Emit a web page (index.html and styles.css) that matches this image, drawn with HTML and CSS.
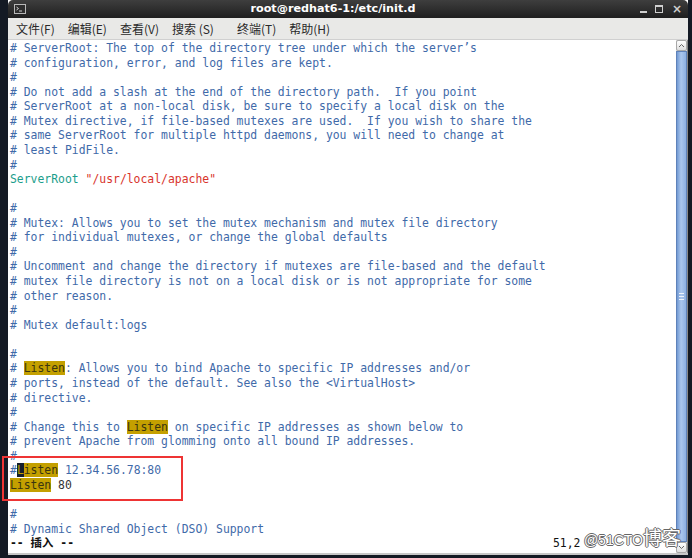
FILE: index.html
```html
<!DOCTYPE html>
<html lang="zh-CN">
<head>
  <meta charset="UTF-8">
  <meta name="viewport" content="width=device-width, initial-scale=1.0">
  <title>root@redhat6-1:/etc/init.d</title>
  <link rel="stylesheet" href="styles.css">
</head>
<body>
  <div class="window">
    <div class="titlebar">
      <span class="term-icon">
        <svg width="12" height="10" viewBox="0 0 12 10">
          <rect x="0.5" y="0.5" width="11" height="9" fill="#2e2e2e" stroke="#b8b8b8"/>
          <polyline points="2.5,3 4.5,4.5 2.5,6" fill="none" stroke="#e0e0e0" stroke-width="0.9"/>
          <line x1="5" y1="7" x2="8" y2="7" stroke="#e0e0e0" stroke-width="0.9"/>
        </svg>
      </span>
      <span class="title">root@redhat6-1:/etc/init.d</span>
      <span class="controls">
        <span class="ctl-min"></span>
        <span class="ctl-max"></span>
        <span class="ctl-close">×</span>
      </span>
    </div>

    <div class="menubar">
      <span>文件(F)</span>
      <span>编辑(E)</span>
      <span>查看(V)</span>
      <span class="menu-search">搜索 (S)</span>
      <span>终端(T)</span>
      <span>帮助(H)</span>
    </div>

    <div class="body">
      <div class="screen">
<pre class="buffer"># ServerRoot: The top of the directory tree under which the server’s
# configuration, error, and log files are kept.
#
# Do not add a slash at the end of the directory path.  If you point
# ServerRoot at a non-local disk, be sure to specify a local disk on the
# Mutex directive, if file-based mutexes are used.  If you wish to share the
# same ServerRoot for multiple httpd daemons, you will need to change at
# least PidFile.
#
<span class="key">ServerRoot</span> <span class="str">"/usr/local/apache"</span>

#
# Mutex: Allows you to set the mutex mechanism and mutex file directory
# for individual mutexes, or change the global defaults
#
# Uncomment and change the directory if mutexes are file-based and the default
# mutex file directory is not on a local disk or is not appropriate for some
# other reason.
#
# Mutex default:logs

#
# <span class="hl">Listen</span>: Allows you to bind Apache to specific IP addresses and/or
# ports, instead of the default. See also the &lt;VirtualHost&gt;
# directive.
#
# Change this to <span class="hl">Listen</span> on specific IP addresses as shown below to
# prevent Apache from glomming onto all bound IP addresses.
#
#<span class="cursor">L</span><span class="hl">isten</span> 12.34.56.78:80
<span class="hl">Listen</span><span class="plain"> 80</span>

#
# Dynamic Shared Object (DSO) Support</pre>
        <div class="statusline">
          <span class="mode">-- 插入 --</span>
          <span class="ruler">51,2</span>
        </div>
      </div>

      <div class="scrollbar">
        <div class="sb-btn">
          <svg width="7" height="5" viewBox="0 0 7 5"><polyline points="1,4 3.5,1.5 6,4" fill="none" stroke="#666" stroke-width="1"/></svg>
        </div>
        <div class="thumb"><span class="grip"></span></div>
        <div class="sb-btn">
          <svg width="7" height="5" viewBox="0 0 7 5"><polyline points="1,1 3.5,3.5 6,1" fill="none" stroke="#666" stroke-width="1"/></svg>
        </div>
      </div>
    </div>

    <!-- annotation over the Listen lines -->
    <div class="mark"></div>
    <div class="watermark">@51CTO<span class="wm-cjk">博客</span></div>
  </div>
</body>
</html>
```

FILE: styles.css
```css
body {
  margin: 0;
  width: 692px;
  height: 558px;
  overflow: hidden;
  background: #141a24;
}
.window {
  position: relative;
  box-sizing: border-box;
  margin-left: 8px;
  width: 680px;
  height: 555px;
  display: flex;
  flex-direction: column;
  background: #fff;
  border-bottom: 2px solid #c8c8c8;
}
.titlebar {
  height: 18px;
  flex: none;
  display: flex;
  align-items: center;
  padding: 0 6px 0 6px;
  background: linear-gradient(#3e3e3e, #1f1f1f);
  border-radius: 5px 5px 0 0;
  color: #fff;
}
.term-icon {
  width: 12px;
  height: 10px;
  display: flex;
}
.title {
  flex: 1;
  text-align: center;
  font-family: "DejaVu Sans", sans-serif;
  font-weight: bold;
  font-size: 11.2px;
  line-height: 18px;
}
.controls {
  width: 42px;
  display: flex;
  align-items: center;
  justify-content: space-between;
  color: #cfcfcf;
}
.ctl-min {
  width: 7px;
  height: 2px;
  margin-top: 6px;
  background: #cfcfcf;
}
.ctl-max {
  width: 6px;
  height: 5px;
  border: 1px solid #cfcfcf;
  border-top-width: 2px;
}
.ctl-close {
  font-family: "DejaVu Sans", sans-serif;
  font-size: 12px;
  font-weight: bold;
  line-height: 12px;
}
.menubar {
  height: 21px;
  flex: none;
  display: flex;
  align-items: center;
  gap: 13px;
  padding-left: 8px;
  background: #e9e9e7;
  border-bottom: 1px solid #d0d0d0;
  font-family: "Noto Sans CJK SC", sans-serif;
  font-size: 12px;
  color: #2a2a2a;
}
.menu-search {
  margin-right: 10px;
}
.body {
  flex: 1;
  display: flex;
  min-height: 0;
}
.screen {
  flex: 1;
  padding: 1px 0 0 2px;
  font-family: "DejaVu Sans Mono", "Noto Sans CJK SC", monospace;
  font-size: 11.42px;
  line-height: 14.56px;
}
.buffer {
  margin: 0;
  font: inherit;
  color: #3f6aa9;
}
.key {
  color: #1c9e8c;
}
.str {
  color: #d8342c;
}
.hl {
  background: #c4a000;
  color: #3a3510;
}
.cursor {
  background: #16202e;
  color: #c4a000;
}
.plain {
  color: #333;
}
.statusline {
  display: flex;
  color: #111;
}
.mode {
  width: 543px;
  font-weight: bold;
}
.scrollbar {
  width: 11px;
  flex: none;
  display: flex;
  flex-direction: column;
  background: #dcdcdc;
  border-right: 1px solid #8a8a8a;
}
.sb-btn {
  height: 11px;
  flex: none;
  display: flex;
  align-items: center;
  justify-content: center;
  box-sizing: border-box;
  background: linear-gradient(#ffffff, #dedede);
  border: 1px solid #a8a8a8;
  border-radius: 2px;
}
.thumb {
  flex: 1;
  display: flex;
  align-items: center;
  justify-content: center;
  background: linear-gradient(to right, #7199d2, #abc7ee 45%, #8db0e2);
  border: 1px solid #5f82ba;
}
.grip {
  width: 5px;
  height: 5px;
  border-top: 1px solid #eef3fb;
  border-bottom: 1px solid #eef3fb;
  background: linear-gradient(transparent 2px, #eef3fb 2px, #eef3fb 3px, transparent 3px);
}
.mark {
  position: absolute;
  left: -6px;
  top: 456px;
  width: 177px;
  height: 41px;
  border: 2px solid #ee3434;
}
.watermark {
  position: absolute;
  right: 7px;
  bottom: 3px;
  font-family: "Liberation Sans", "Noto Sans CJK SC", sans-serif;
  font-size: 14px;
  line-height: 20px;
  color: #fff;
  text-shadow: 1px 0 0 #666, -1px 0 0 #666, 0 1px 0 #666, 0 -1px 0 #666;
}
.wm-cjk {
  font-size: 19px;
}
```
